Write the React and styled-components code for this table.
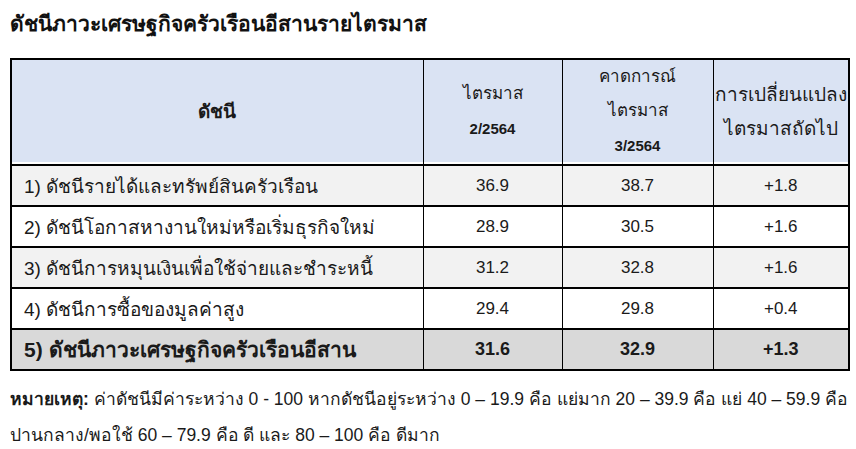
import styled, { createGlobalStyle } from "styled-components";

const GlobalStyle = createGlobalStyle`
  body {
    margin: 0;
    background: #ffffff;
    font-family: "Liberation Sans", Tahoma, "Noto Sans", sans-serif;
    color: #1a1a1a;
  }
`;

const Page = styled.div`
  width: 856px;
  height: 449px;
  padding: 12px 8px 0 10px;
  box-sizing: border-box;
`;

const Title = styled.h1`
  margin: 0 0 22px;
  font-size: 21px;
  font-weight: 700;
  line-height: 24px;
  color: #111;
`;

const Table = styled.table`
  width: 838px;
  border-collapse: collapse;
  table-layout: fixed;
  border: 2px solid #000;
`;

const HeadCell = styled.th`
  height: 103px;
  padding: 0;
  background: #dae3f3;
  border: 1px solid #000;
  border-bottom: 2px solid #000;
  box-shadow: inset 0 -2px 0 #fff;
  font-weight: ${(p) => (p.$bold ? 700 : 400)};
  font-size: ${(p) => p.$size || "17px"};
  line-height: 34px;
  text-align: center;
  vertical-align: middle;
  white-space: nowrap;
`;

const Period = styled.div`
  font-weight: 700;
  font-size: 15px;
  line-height: 36px;
`;

const Row = styled.tr`
  background: ${(p) => p.$bg};
  font-weight: ${(p) => (p.$bold ? 700 : 400)};
`;

const Cell = styled.td`
  height: 39px;
  padding: 0 ${(p) => (p.$left ? "12px" : "0")};
  border: 1px solid #000;
  border-top-width: 2px;
  font-size: ${(p) => p.$size || "17px"};
  text-align: ${(p) => (p.$left ? "left" : "center")};
  vertical-align: middle;
  white-space: nowrap;
`;

const Note = styled.p`
  margin: 10px 0 0;
  font-family: "Liberation Sans Narrow", "Liberation Sans", sans-serif;
  font-size: 17.5px;
  line-height: 36px;
  color: #1a1a1a;
`;

const NoteLabel = styled.b`
  font-weight: 700;
`;

const rows = [
  ["1) ดัชนีรายได้และทรัพย์สินครัวเรือน", "36.9", "38.7", "+1.8", "#f2f2f2"],
  ["2) ดัชนีโอกาสหางานใหม่หรือเริ่มธุรกิจใหม่", "28.9", "30.5", "+1.6", "#ffffff"],
  ["3) ดัชนีการหมุนเงินเพื่อใช้จ่ายและชำระหนี้", "31.2", "32.8", "+1.6", "#f2f2f2"],
  ["4) ดัชนีการซื้อของมูลค่าสูง", "29.4", "29.8", "+0.4", "#ffffff"],
];

export default function App() {
  return (
    <>
      <GlobalStyle />
      <Page>
        <Title>ดัชนีภาวะเศรษฐกิจครัวเรือนอีสานรายไตรมาส</Title>
        <Table>
          <colgroup>
            <col style={{ width: 412 }} />
            <col style={{ width: 139 }} />
            <col style={{ width: 151 }} />
            <col style={{ width: 136 }} />
          </colgroup>
          <thead>
            <tr>
              <HeadCell $bold $size="19px">ดัชนี</HeadCell>
              <HeadCell>
                ไตรมาส
                <Period>2/2564</Period>
              </HeadCell>
              <HeadCell>
                คาดการณ์
                <br />
                ไตรมาส
                <Period>3/2564</Period>
              </HeadCell>
              <HeadCell $size="19px">
                การเปลี่ยนแปลง
                <br />
                ไตรมาสถัดไป
              </HeadCell>
            </tr>
          </thead>
          <tbody>
            {rows.map(([name, q2, q3, diff, bg]) => (
              <Row key={name} $bg={bg}>
                <Cell $left $size="19px">{name}</Cell>
                <Cell>{q2}</Cell>
                <Cell>{q3}</Cell>
                <Cell>{diff}</Cell>
              </Row>
            ))}
            <Row $bg="#d9d9d9" $bold>
              <Cell $left $size="21px">5) ดัชนีภาวะเศรษฐกิจครัวเรือนอีสาน</Cell>
              <Cell $size="18px">31.6</Cell>
              <Cell $size="18px">32.9</Cell>
              <Cell $size="18px">+1.3</Cell>
            </Row>
          </tbody>
        </Table>
        <Note>
          <NoteLabel>หมายเหตุ:</NoteLabel> ค่าดัชนีมีค่าระหว่าง 0 - 100 หากดัชนีอยู่ระหว่าง 0 – 19.9 คือ แย่มาก 20 – 39.9 คือ แย่ 40 – 59.9 คือ ปานกลาง/พอใช้ 60 – 79.9 คือ ดี และ 80 – 100 คือ ดีมาก
        </Note>
      </Page>
    </>
  );
}
